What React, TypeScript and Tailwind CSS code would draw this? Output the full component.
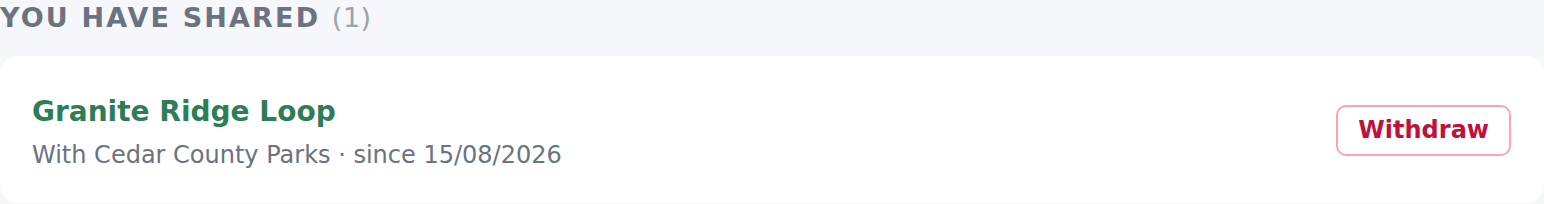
import React from 'react';

const font = "font-['DejaVu_Sans',sans-serif]";

export default function App() {
  return (
    <div className={`min-h-screen bg-[#f6f7fb] ${font}`}>
      <h2 className="text-[27px] leading-[36px] font-bold uppercase tracking-[0.08em] text-[#6b7280]">
        You have shared <span className="font-normal tracking-[0.02em] text-[#9ca3af]">(1)</span>
      </h2>

      <div className="mt-[20px] bg-white rounded-[18px] pl-[32px] pr-[33px] pt-[37px] pb-[32px] flex items-center justify-between">
        <div className="flex flex-col gap-[9px]">
          <h3 className="text-[28px] leading-[37px] font-bold text-[#2f7d57]">Granite Ridge Loop</h3>
          <p className="text-[24px] leading-[32px] text-[#6b7280]">
            With Cedar County Parks · since 15/08/2026
          </p>
        </div>
        <button className="h-[51px] px-[20px] -mt-[4px] rounded-[10px] border-2 border-[#fda4af] bg-white text-[24px] font-bold text-[#be123c]">
          Withdraw
        </button>
      </div>
    </div>
  );
}
